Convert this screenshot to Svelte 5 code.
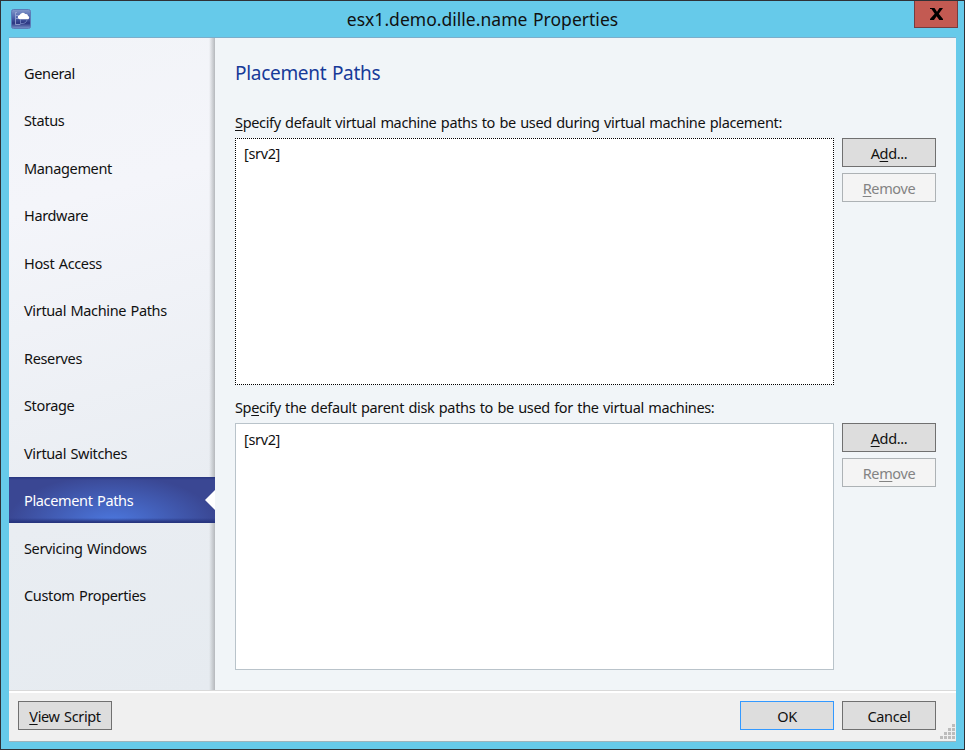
<script>
  const tabs = [
    'General', 'Status', 'Management', 'Hardware', 'Host Access', 'Virtual Machine Paths',
    'Reserves', 'Storage', 'Virtual Switches', 'Placement Paths', 'Servicing Windows', 'Custom Properties'
  ];
  const groups = [
    { pre: '', key: 'S', post: 'pecify default virtual machine paths to be used during virtual machine placement:', add: ['A', 'd', 'd...'], remove: ['', 'R', 'emove'], focus: true },
    { pre: 'Sp', key: 'e', post: 'cify the default parent disk paths to be used for the virtual machines:', add: ['', 'A', 'dd...'], remove: ['Re', 'm', 'ove'], focus: false }
  ];
  let selected = $state('Placement Paths');
  const dots = [[12, 0], [8, 4], [12, 4], [4, 8], [8, 8], [12, 8], [0, 12], [4, 12], [8, 12], [12, 12]];
</script>

<div class="window">
  <header>
    <svg class="app" width="20" height="20" viewBox="0 0 20 20">
      <defs>
        <linearGradient id="ic" x1="0" y1="0" x2="0" y2="1">
          <stop offset="0" stop-color="#8398cb" /><stop offset=".45" stop-color="#4a5fa8" /><stop offset=".72" stop-color="#2b3580" /><stop offset="1" stop-color="#7c95cc" />
        </linearGradient>
      </defs>
      <rect x=".5" y=".5" width="19" height="19" rx="2" fill="url(#ic)" stroke="#5c7cb8" />
      <path d="M6 3.5H4.5V15.5H9M5 6.5H7M5 9.5H7" fill="none" stroke="#a9b6dc" stroke-opacity=".7" />
      <path d="M9.5 10.5V15.5M10 14.5Q15 15 16 11" fill="none" stroke="#8293cc" stroke-opacity=".7" />
      <path d="M9 10.2a2.1 2.1 0 0 1-.3-4.2A3.2 3.2 0 0 1 14.2 5 2.2 2.2 0 0 1 17 7a1.7 1.7 0 0 1 .2 3.2Z" fill="#fff" />
    </svg>
    <h1>esx1.demo.dille.name Properties</h1>
    <button class="close" aria-label="Close">
      <svg width="14" height="12" viewBox="0 0 14 12"><path d="M0 0H4.5L7 3.7 9.5 0H13L8.8 5.8 13 11V12H9.3L6.6 8.2 4 12H0V11L4.7 5.8 1.5 1H0Z" /></svg>
    </button>
  </header>
  <div class="client">
    <div class="body">
      <nav>
        {#each tabs as tab}
          <button class="tab" class:selected={tab === selected} onclick={() => (selected = tab)}>
            <span>{tab}</span>
            {#if tab === selected}
              <svg class="notch" width="11" height="20" viewBox="0 0 11 20"><path d="M11 0V20L1 10Z" fill="#fff" /></svg>
            {/if}
          </button>
        {/each}
      </nav>
      <main>
        <h2>Placement Paths</h2>
        {#each groups as g}
          <section>
            <p class="label">{g.pre}<u>{g.key}</u>{g.post}</p>
            <div class="row">
              <div class="list" class:focus={g.focus}>[srv2]</div>
              <div class="actions">
                <button class="btn">{g.add[0]}<u>{g.add[1]}</u>{g.add[2]}</button>
                <button class="btn" disabled>{g.remove[0]}<u>{g.remove[1]}</u>{g.remove[2]}</button>
              </div>
            </div>
          </section>
        {/each}
      </main>
    </div>
    <footer>
      <button class="btn"><u>V</u>iew Script</button>
      <div class="right">
        <button class="btn ok">OK</button>
        <button class="btn">Cancel</button>
      </div>
      <svg class="grip" width="15" height="15" viewBox="0 0 15 15">
        {#each dots as [x, y]}<rect {x} {y} width="3" height="3" fill="#bcbcbc" />{/each}
      </svg>
    </footer>
  </div>
</div>

<style>
  * { box-sizing: border-box; }
  :global(body) { margin: 0; }
  button { font: inherit; letter-spacing: inherit; word-spacing: inherit; padding: 0; border: 0; }
  .window {
    width: 965px; height: 750px; border: 1px solid #2f3136; background: #66caea;
    padding: 0 7px 7px; display: flex; flex-direction: column;
    font: 14.5px/20px "Noto Sans", sans-serif; letter-spacing: -0.35px; word-spacing: 1px; color: #111;
  }
  header { height: 36px; display: flex; position: relative; flex: none; }
  .app { margin: 8px 0 0 3px; }
  h1 { position: absolute; left: 0; right: 0; top: 6px; margin: 0; text-align: center; font-size: 17.5px; line-height: 24px; font-weight: 400; letter-spacing: 0.02px; }
  .close { margin-left: auto; margin-right: -1px; width: 44px; height: 27px; background: #c35a52; border: 1px solid #763c3f; border-top: 0; display: flex; justify-content: center; padding: 7px 0 0 2px; }
  .client { flex: 1; min-height: 0; margin: 0 1px; border-top: 1px solid #7baecb; display: flex; flex-direction: column; }
  .body { height: 652px; display: flex; background: #f1f5f8; }
  nav {
    width: 206px; padding-top: 11px; flex: none;
    background: linear-gradient(90deg, transparent 200px, #b5b8bc 206px), linear-gradient(165deg, #f2f4f8 0, #f4f5fa 25%, #e9edf2 70%, #e6ebf0 100%);
  }
  .tab { display: flex; align-items: center; width: 206px; height: 47.5px; padding: 0 0 0 15px; background: none; color: #111; position: relative; }
  .tab.selected {
    height: 46px; margin-bottom: 1.5px; color: #fff;
    background: linear-gradient(#27357f, transparent 3px, transparent 41px, #27357f 45px), radial-gradient(ellipse 105px 48px at 50% 100%, #4c78df, #3a4793);
  }
  .notch { position: absolute; right: 0; top: 13px; }
  main { padding: 0 20px; flex: 1; }
  h2 { margin: 22px 0 25px; font-size: 19px; line-height: 26px; font-weight: 400; color: #173a98; letter-spacing: -0.3px; }
  section { height: 285px; }
  .label { margin: 0; height: 27px; line-height: 22px; white-space: nowrap; }
  .row { display: flex; gap: 8px; }
  .list { width: 599px; height: 247px; background: #fff; border: 1px solid #b9c3ca; padding: 5px 8px; }
  .focus { border: 1px dotted #000; padding-top: 4px; }
  .actions { display: flex; flex-direction: column; gap: 6px; }
  .btn { width: 94px; height: 29px; background: #ddd; border: 1px solid #707070; color: #111; }
  .btn:disabled { background: #f4f4f4; border-color: #adb2b5; color: #838383; }
  .btn.ok { border-color: #3399ff; }
  u { text-decoration: underline; text-underline-offset: 2px; text-decoration-skip-ink: none; }
  footer { flex: 1; border-top: 1px solid #d9d9d9; border-bottom: 1px solid #9db4bd; background: linear-gradient(#fff 2px, #f0f0f0 2px); display: flex; justify-content: space-between; padding: 10px 20px 0 9px; position: relative; }
  .right { display: flex; gap: 8px; }
  .grip { position: absolute; right: 1px; bottom: 2px; }
</style>
